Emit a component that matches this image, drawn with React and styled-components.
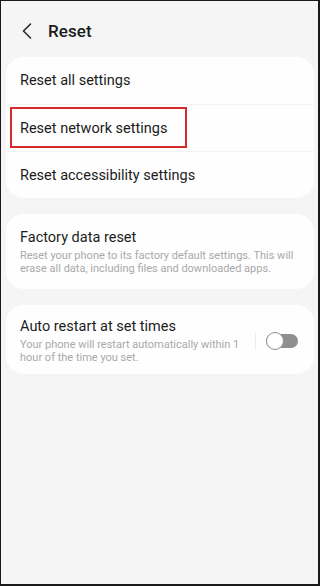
import React from 'react';
import styled, { createGlobalStyle } from 'styled-components';

const GlobalStyle = createGlobalStyle`
  html, body {
    margin: 0;
    padding: 0;
    background: #f5f5f5;
  }
  * {
    box-sizing: border-box;
  }
`;

const Frame = styled.div`
  width: 320px;
  height: 586px;
  background: #f5f5f5;
  border-style: solid;
  border-color: #1a1a1a;
  border-width: 1px 2px 2px 1px;
  font-family: Roboto, "Noto Sans", sans-serif;
  color: #1c1c1c;
  overflow: hidden;
`;

const Header = styled.div`
  display: flex;
  align-items: center;
  height: 56px;
  padding: 4px 0 0 19px;
  gap: 14px;
`;

const BackButton = styled.div`
  width: 14px;
  height: 18px;
  display: flex;
  align-items: center;
  justify-content: center;
`;

const Title = styled.h1`
  margin: 0;
  font-size: 17px;
  font-weight: 500;
  letter-spacing: 0.1px;
`;

const Content = styled.div`
  display: flex;
  flex-direction: column;
  gap: 16px;
  padding: 0 4px 0 5px;
`;

const Card = styled.div`
  background: #fefefe;
  border-radius: 18px;
`;

const Row = styled.div`
  position: relative;
  display: flex;
  align-items: center;
  height: 47px;
  padding: 0 14px;
  & + & {
    border-top: 1px solid #f3f3f3;
  }
`;

const RowText = styled.span`
  font-size: 14.5px;
  color: #1c1c1c;
`;

const Highlight = styled.div`
  position: absolute;
  left: 4px;
  top: 2px;
  width: 177px;
  height: 41px;
  border: 2px solid #d72a2a;
`;

const Item = styled.div`
  display: flex;
  align-items: center;
  padding: ${(p) => p.$pad || '15px 14px 14px'};
  gap: 10px;
`;

const ItemText = styled.div`
  flex: 1;
  display: flex;
  flex-direction: column;
  gap: 3px;
`;

const Sub = styled.div`
  font-size: 11px;
  line-height: 13px;
  color: #a9a9a9;
`;

const Divider = styled.div`
  width: 1px;
  height: 18px;
  background: #ececec;
`;

const Switch = styled.div`
  position: relative;
  width: 32px;
  height: 18px;
  margin: 0 16px 0 0;
  display: flex;
  align-items: center;
`;

const Track = styled.div`
  width: 100%;
  height: 14px;
  border-radius: 7px;
  background: #8f8f8f;
`;

const Knob = styled.div`
  position: absolute;
  left: 0;
  top: 0;
  width: 18px;
  height: 18px;
  border-radius: 50%;
  background: #fff;
  border: 1.5px solid #8f8f8f;
`;

export default function App() {
  return (
    <>
      <GlobalStyle />
      <Frame>
        <Header>
          <BackButton>
            <svg width="10" height="16" viewBox="0 0 10 16">
              <path d="M8.5 1 L1.5 8 L8.5 15" fill="none" stroke="#2a2a2a" strokeWidth="1.6" strokeLinecap="round" strokeLinejoin="round" />
            </svg>
          </BackButton>
          <Title>Reset</Title>
        </Header>
        <Content>
          <Card>
            <Row><RowText>Reset all settings</RowText></Row>
            <Row>
              <RowText>Reset network settings</RowText>
              <Highlight />
            </Row>
            <Row><RowText>Reset accessibility settings</RowText></Row>
          </Card>
          <Card>
            <Item>
              <ItemText>
                <RowText>Factory data reset</RowText>
                <Sub>Reset your phone to its factory default settings. This will erase all data, including files and downloaded apps.</Sub>
              </ItemText>
            </Item>
          </Card>
          <Card>
            <Item $pad="13px 0 10px 14px">
              <ItemText>
                <RowText>Auto restart at set times</RowText>
                <Sub>Your phone will restart automatically within 1 hour of the time you set.</Sub>
              </ItemText>
              <Divider />
              <Switch>
                <Track />
                <Knob />
              </Switch>
            </Item>
          </Card>
        </Content>
      </Frame>
    </>
  );
}
